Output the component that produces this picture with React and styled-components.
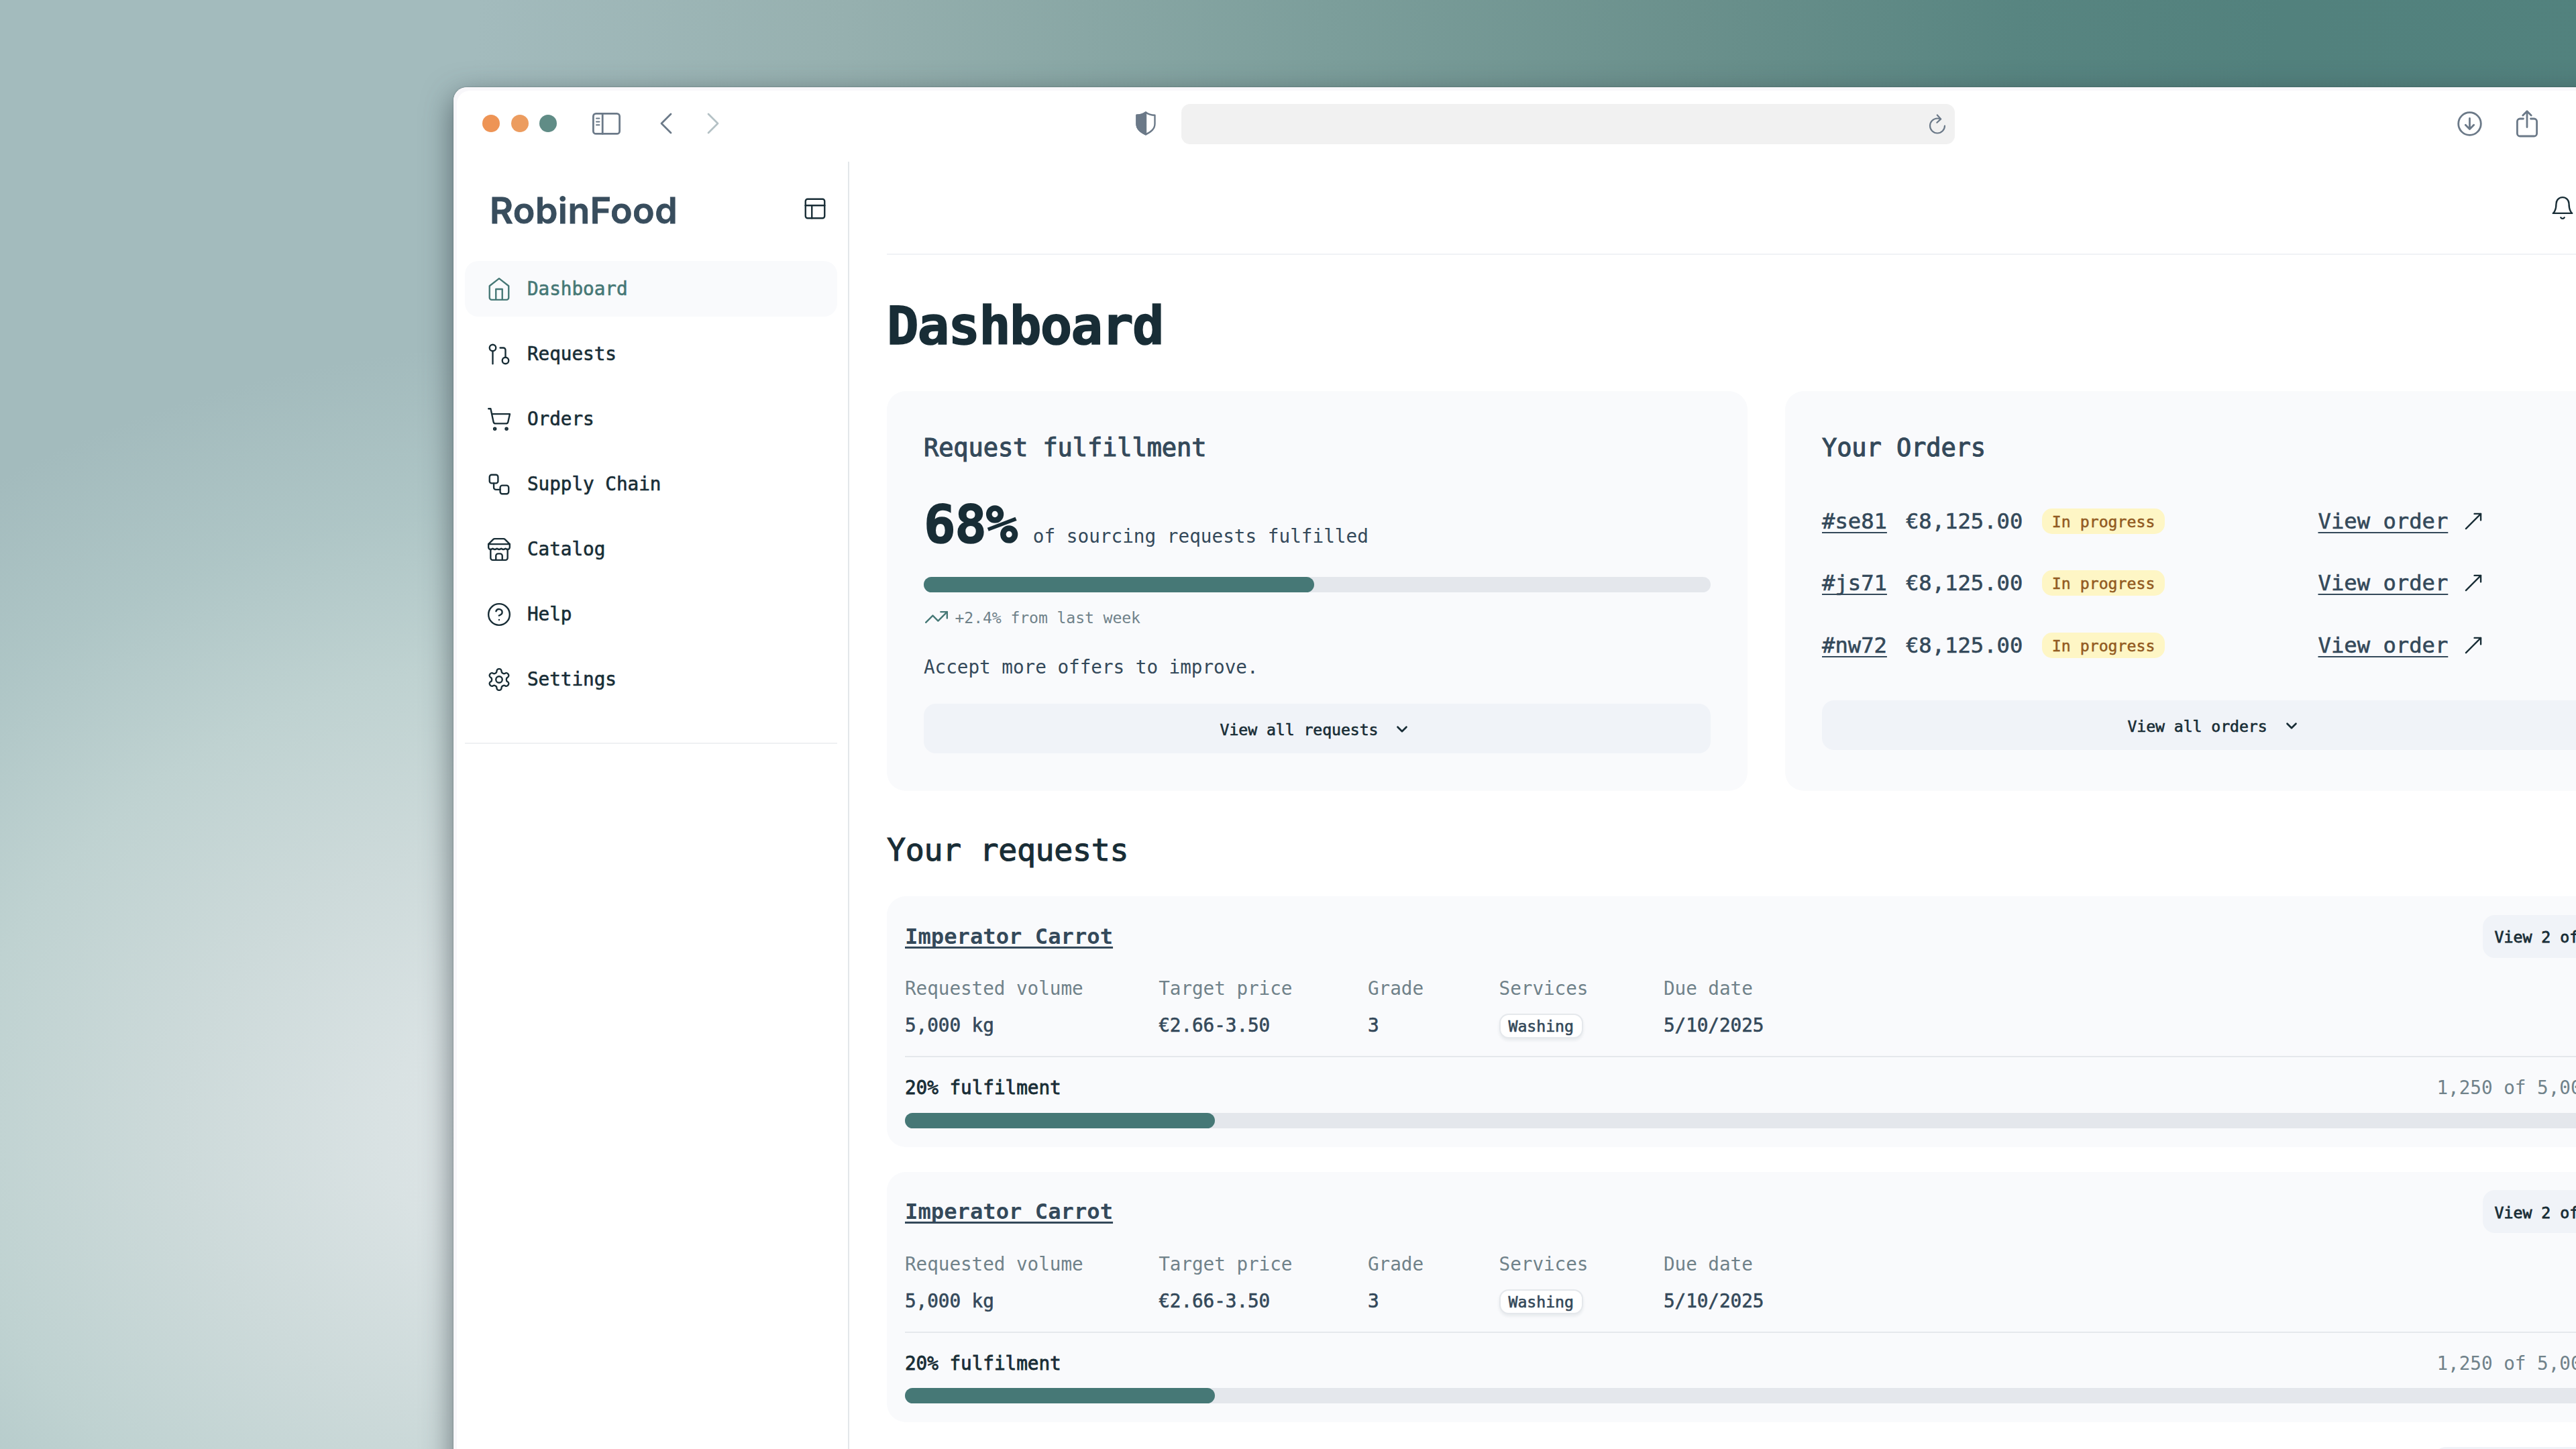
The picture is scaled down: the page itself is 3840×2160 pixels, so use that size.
import React from "react";
import styled, { createGlobalStyle } from "styled-components";
import {
  ChevronDown,
  CircleHelp,
  GitPullRequest,
  MoveUpRight,
  PanelsTopLeft,
  Plus,
  ShoppingCart,
  TrendingUp,
  Workflow,
} from "lucide-react";

const colors = {
  ink: "#182d36",
  text: "#34495a",
  muted: "#70828a",
  teal: "#467876",
  card: "#f9fafc",
  button: "#f0f3f8",
  track: "#e4e7ec",
  line: "#e5e8ec",
  chrome: "#6b7988",
};

const GlobalStyle = createGlobalStyle`
  * {
    box-sizing: border-box;
  }
  body {
    margin: 0;
    overflow: hidden;
    font-family: "DejaVu Sans Mono", monospace;
  }
  h1, h2, h3, p {
    margin: 0;
  }
`;

const Desktop = styled.div`
  width: 3840px;
  height: 2160px;
  overflow: hidden;
  padding: 130px 0 0 676px;
  background:
    radial-gradient(
      1500px 1180px at 840px 1690px,
      #dfe5e7 0%,
      #d9e2e3 18%,
      #cddada 38%,
      #bfd2d1 60%,
      rgba(177, 200, 200, 0.8) 80%,
      rgba(164, 188, 190, 0) 100%
    ),
    linear-gradient(
      93deg,
      #a3bbbd 0%,
      #a3bbbd 18%,
      #96b0af 32%,
      #7c9e9b 50%,
      #6a908c 64%,
      #588581 76%,
      #52817d 86%,
      #52827e 100%
    );
`;

const Window = styled.div`
  width: 3300px;
  height: 2200px;
  background: #fff;
  border-radius: 20px 0 0 0;
  box-shadow:
    inset 5px 5px 0 #f8f7fa,
    0 0 2px 0 rgba(60, 70, 75, 0.6),
    0 14px 44px 2px rgba(50, 62, 70, 0.62);
  overflow: hidden;
`;

const Toolbar = styled.div`
  display: flex;
  align-items: center;
  height: 111px;
  padding: 0 0 3px 43px;
  color: ${colors.chrome};
  svg {
    flex-shrink: 0;
  }
`;

const Lights = styled.div`
  display: flex;
  gap: 16.5px;
  margin-right: 53px;
`;

const Light = styled.span`
  width: 26px;
  height: 26px;
  border-radius: 50%;
  background: ${(props) => props.color};
`;

const History = styled.div`
  display: flex;
  gap: 52px;
  margin: 0 621px 0 59px;
`;

const AddressBar = styled.div`
  display: flex;
  align-items: center;
  justify-content: flex-end;
  width: 1153px;
  height: 60px;
  margin: 2px 749px 0 38px;
  padding: 0 13px 0 0;
  border-radius: 13px;
  background: #f1f1f1;
`;

const AppShell = styled.div`
  display: flex;
  height: 2088px;
`;

const Sidebar = styled.aside`
  width: 590px;
  flex-shrink: 0;
  padding: 0 16px 0 17px;
  border-right: 2px solid #e3e7ea;
`;

const Brand = styled.div`
  display: flex;
  align-items: center;
  justify-content: space-between;
  height: 148px;
  padding: 0 14px 9px 37px;
  color: ${colors.ink};
`;

const BrandName = styled.span`
  padding-top: 6px;
  font-family: Inter, "Liberation Sans", sans-serif;
  font-size: 53.6px;
  font-weight: 600;
  letter-spacing: 0.5px;
  color: #384d5d;
  -webkit-text-stroke: 0.8px currentColor;
`;

const Nav = styled.nav`
  display: flex;
  flex-direction: column;
  gap: 14px;
  padding-bottom: 53px;
  border-bottom: 2px solid #eff1f3;
`;

const NavItem = styled.a`
  display: flex;
  align-items: center;
  gap: 23px;
  height: 83px;
  padding: 0 32px;
  border-radius: 20px;
  font-size: 27.7px;
  letter-spacing: -0.05px;
  -webkit-text-stroke: 0.6px currentColor;
  color: ${(props) => (props.$active ? colors.teal : colors.ink)};
  background: ${(props) => (props.$active ? colors.card : "transparent")};
`;

const Main = styled.main`
  width: 2622px;
  flex-shrink: 0;
  margin-left: 56px;
`;

const TopBar = styled.header`
  display: flex;
  align-items: center;
  height: 139px;
  padding-left: 2479px;
  border-bottom: 2px solid #f0f2f5;
  color: ${colors.ink};
`;

const PageTitle = styled.h1`
  margin-top: 56px;
  font-size: 79px;
  line-height: 100px;
  letter-spacing: -1.8px;
  color: ${colors.ink};
  -webkit-text-stroke: 1.6px currentColor;
`;

const Cards = styled.div`
  display: grid;
  grid-template-columns: 1fr 1fr;
  gap: 56px;
  margin-top: 47px;
`;

const Card = styled.section`
  height: 596px;
  padding: 61px 55px 0;
  border-radius: 28px;
  background: ${colors.card};
`;

const CardTitle = styled.h2`
  font-size: 37px;
  font-weight: 400;
  line-height: 48px;
  letter-spacing: -0.1px;
  color: ${colors.text};
  -webkit-text-stroke: 1.1px currentColor;
`;

const Stat = styled.div`
  display: flex;
  align-items: baseline;
  gap: 24px;
  height: 90px;
  margin-top: 44.5px;
  line-height: 90px;
  font-size: 27.7px;
  color: ${colors.text};
`;

const StatValue = styled.strong`
  font-size: 79px;
  letter-spacing: -1.3px;
  color: ${colors.ink};
  -webkit-text-stroke: 1.6px currentColor;
`;

const Track = styled.div`
  height: 23px;
  margin-top: ${(props) => props.$top}px;
  border-radius: 12px;
  background: ${colors.track};
`;

const Fill = styled.div`
  width: ${(props) => props.$width}px;
  height: 100%;
  border-radius: 12px;
  background: ${colors.teal};
`;

const Trend = styled.div`
  display: flex;
  align-items: center;
  gap: 8.5px;
  height: 30px;
  margin-top: 22.5px;
  font-size: 23.2px;
  letter-spacing: -0.14px;
  color: ${colors.muted};
  svg {
    color: ${colors.teal};
  }
`;

const Hint = styled.p`
  margin-top: 41.4px;
  font-size: 27.7px;
  line-height: 36px;
  letter-spacing: -0.05px;
  color: ${colors.text};
`;

const WideButton = styled.button`
  display: flex;
  align-items: center;
  justify-content: center;
  gap: 23px;
  width: 100%;
  height: 74px;
  margin-top: ${(props) => props.$top}px;
  padding: 2px 5px 0 0;
  border: none;
  border-radius: 18px;
  background: ${colors.button};
  font-family: inherit;
  font-size: 23.2px;
  letter-spacing: -0.08px;
  color: ${colors.ink};
  -webkit-text-stroke: 0.6px currentColor;
`;

const Orders = styled.div`
  display: flex;
  flex-direction: column;
  gap: 48.3px;
  margin-top: 63px;
`;

const OrderRow = styled.div`
  display: flex;
  align-items: center;
  height: 44px;
  font-size: 32.2px;
  line-height: 44px;
  color: ${colors.text};
  svg {
    color: ${colors.ink};
  }
`;

const OrderMain = styled.div`
  display: flex;
  align-items: center;
  width: 739.5px;
`;

const Link = styled.a`
  text-decoration: underline;
  text-decoration-thickness: 2px;
  text-underline-offset: 5px;
  text-decoration-skip-ink: none;
  -webkit-text-stroke: 0.6px currentColor;
`;

const Price = styled.span`
  margin: 0 28.5px 0 28px;
  -webkit-text-stroke: 0.6px currentColor;
`;

const Badge = styled.span`
  height: 38px;
  padding: 2px 15px 0;
  border-radius: 15px;
  background: #fef6c5;
  font-size: 23.2px;
  line-height: 36px;
  color: #925b22;
  -webkit-text-stroke: 0.5px currentColor;
`;

const ViewOrder = styled.div`
  display: flex;
  align-items: center;
  gap: 18.5px;
`;

const SectionTitle = styled.h2`
  margin-top: 57.8px;
  font-size: 46.6px;
  font-weight: 400;
  line-height: 60px;
  letter-spacing: -0.35px;
  color: ${colors.ink};
  -webkit-text-stroke: 1.1px currentColor;
`;

const Requests = styled.div`
  display: flex;
  flex-direction: column;
  gap: 37px;
  margin-top: 39.2px;
`;

const RequestCard = styled.article`
  height: 373.7px;
  padding: 27.8px 27px 0;
  border-radius: 28px;
  background: ${colors.card};
`;

const RequestHead = styled.div`
  display: flex;
  align-items: center;
  justify-content: space-between;
  height: 64px;
`;

const RequestName = styled.h3`
  font-size: 32.2px;
  font-weight: 700;
  color: ${colors.text};
  text-decoration: underline;
  text-decoration-thickness: 2.5px;
  text-underline-offset: 4px;
  text-decoration-skip-ink: none;
`;

const SmallButton = styled.button`
  height: 64px;
  padding: 2px 17px 0 18px;
  border: none;
  border-radius: 18px;
  background: ${colors.button};
  font-family: inherit;
  font-size: 23.2px;
  color: ${colors.ink};
  -webkit-text-stroke: 0.8px currentColor;
`;

const Facts = styled.dl`
  display: flex;
  gap: 112.6px;
  margin: 28.4px 0 0;
  padding-bottom: 27.1px;
  border-bottom: 2px solid ${colors.line};
  font-size: 27.7px;
  line-height: 36px;
  letter-spacing: -0.07px;
`;

const Fact = styled.div`
  dt {
    color: ${colors.muted};
  }
  dd {
    display: flex;
    height: 36px;
    margin: 19px 0 0;
    white-space: nowrap;
    color: ${colors.text};
    -webkit-text-stroke: 0.6px currentColor;
  }
`;

const Tag = styled.span`
  height: 37px;
  padding: 0 12px;
  border: 2px solid ${colors.line};
  border-radius: 14px;
  background: #fff;
  box-shadow: 0 3px 4px rgba(30, 45, 60, 0.08);
  font-size: 23.2px;
  line-height: 34px;
`;

const Progress = styled.div`
  display: flex;
  justify-content: space-between;
  margin-top: 28px;
  padding-right: 2px;
  font-size: 27.7px;
  line-height: 36px;
  letter-spacing: -0.05px;
  color: ${colors.muted};
`;

const ProgressLabel = styled.span`
  color: ${colors.ink};
  -webkit-text-stroke: 0.8px currentColor;
`;

const MoreButton = styled(SmallButton)`
  align-self: flex-end;
  width: 316px;
`;

const ICON = { size: 38, strokeWidth: 1.5 };

const Icon = ({ children }) => (
  <svg
    width="38"
    height="38"
    viewBox="0 0 24 24"
    fill="none"
    stroke="currentColor"
    strokeWidth="1.5"
    strokeLinecap="round"
    strokeLinejoin="round"
  >
    {children}
  </svg>
);

const HomeIcon = () => (
  <Icon>
    <path d="m3 9 9-7 9 7v11a2 2 0 0 1-2 2H5a2 2 0 0 1-2-2z" />
    <path d="M9 22V12h6v10" />
  </Icon>
);

const StoreIcon = () => (
  <Icon>
    <path d="m2 7 4.41-4.41A2 2 0 0 1 7.83 2h8.34a2 2 0 0 1 1.42.59L22 7" />
    <path d="M4 12v8a2 2 0 0 0 2 2h12a2 2 0 0 0 2-2v-8" />
    <path d="M15 22v-4a2 2 0 0 0-2-2h-2a2 2 0 0 0-2 2v4" />
    <path d="M2 7h20" />
    <path d="M22 7v3a2 2 0 0 1-2 2a2.7 2.7 0 0 1-1.59-.63.7.7 0 0 0-.82 0A2.7 2.7 0 0 1 16 12a2.7 2.7 0 0 1-1.59-.63.7.7 0 0 0-.82 0A2.7 2.7 0 0 1 12 12a2.7 2.7 0 0 1-1.59-.63.7.7 0 0 0-.82 0A2.7 2.7 0 0 1 8 12a2.7 2.7 0 0 1-1.59-.63.7.7 0 0 0-.82 0A2.7 2.7 0 0 1 4 12a2 2 0 0 1-2-2V7" />
  </Icon>
);

const GearIcon = () => (
  <Icon>
    <path d="M12.22 2h-.44a2 2 0 0 0-2 2v.18a2 2 0 0 1-1 1.73l-.43.25a2 2 0 0 1-2 0l-.15-.08a2 2 0 0 0-2.73.73l-.22.38a2 2 0 0 0 .73 2.73l.15.1a2 2 0 0 1 1 1.72v.51a2 2 0 0 1-1 1.74l-.15.09a2 2 0 0 0-.73 2.73l.22.38a2 2 0 0 0 2.73.73l.15-.08a2 2 0 0 1 2 0l.43.25a2 2 0 0 1 1 1.73V20a2 2 0 0 0 2 2h.44a2 2 0 0 0 2-2v-.18a2 2 0 0 1 1-1.73l.43-.25a2 2 0 0 1 2 0l.15.08a2 2 0 0 0 2.73-.73l.22-.39a2 2 0 0 0-.73-2.73l-.15-.08a2 2 0 0 1-1-1.74v-.5a2 2 0 0 1 1-1.74l.15-.09a2 2 0 0 0 .73-2.73l-.22-.38a2 2 0 0 0-2.73-.73l-.15.08a2 2 0 0 1-2 0l-.43-.25a2 2 0 0 1-1-1.73V4a2 2 0 0 0-2-2z" />
    <circle cx="12" cy="12" r="3" />
  </Icon>
);

const BellIcon = () => (
  <Icon>
    <path d="M6 8a6 6 0 0 1 12 0c0 7 3 9 3 9H3s3-2 3-9" />
    <path d="M10.3 21a1.94 1.94 0 0 0 3.4 0" />
  </Icon>
);

// Browser chrome icons, drawn at their final pixel size
const chromeStroke = {
  fill: "none",
  stroke: "currentColor",
  strokeWidth: 2.8,
  strokeLinecap: "round",
  strokeLinejoin: "round",
};

const SidebarIcon = () => (
  <svg width="42" height="33" viewBox="0 0 42 33" {...chromeStroke}>
    <rect x="1.4" y="1.4" width="39.2" height="30" rx="4" />
    <path d="M15.2 1.4v30" />
    <path d="M6 8.5h4.5M6 13.5h4.5M6 18.2h4.5" strokeWidth="2" />
  </svg>
);

const BackIcon = () => (
  <svg width="18" height="32" viewBox="0 0 18 32" {...chromeStroke}>
    <path d="M16 2 2 16l14 14" />
  </svg>
);

const ForwardIcon = () => (
  <svg width="18" height="32" viewBox="0 0 18 32" {...chromeStroke} stroke="#b4c1c5">
    <path d="m2 2 14 14L2 30" />
  </svg>
);

const ShieldIcon = () => (
  <svg width="30" height="36" viewBox="0 0 30 36" {...chromeStroke} strokeWidth="2.4">
    <path d="M15 1.5c3.5 2.6 8 4.2 13.5 4.3v12.7c0 7.5-5 11.5-13.5 15.9C6.5 30 1.5 26 1.5 18.5V5.8C7 5.7 11.5 4.1 15 1.5z" />
    <path
      d="M15 1.5v32.9C6.5 30 1.5 26 1.5 18.5V5.8C7 5.7 11.5 4.1 15 1.5z"
      fill="currentColor"
    />
  </svg>
);

const ReloadIcon = () => (
  <svg width="26" height="30" viewBox="0 0 26 30" {...chromeStroke} strokeWidth="2.2">
    <path d="M24 17.5a11 11 0 1 1-11-11c1.9 0 3.3.3 4.8.9" />
    <path d="m12.8 1.5 5.4 5.9-5.8 5.4" />
  </svg>
);

const DownloadIcon = () => (
  <svg width="37" height="37" viewBox="0 0 37 37" {...chromeStroke}>
    <circle cx="18.5" cy="18.5" r="16.8" />
    <path d="M18.5 10.5V26M12.3 20.3l6.2 6.2 6.2-6.2" />
  </svg>
);

const ShareIcon = () => (
  <svg width="32" height="41" viewBox="0 0 32 41" {...chromeStroke}>
    <path d="M10.5 13H5.4a4 4 0 0 0-4 4v18a4 4 0 0 0 4 4h21.2a4 4 0 0 0 4-4V17a4 4 0 0 0-4-4h-5.1" />
    <path d="M16 25.5V2M9.8 8 16 1.8 22.2 8" />
  </svg>
);

const ToolbarActions = styled.div`
  display: flex;
  align-items: center;
  gap: 51px;
`;

const navItems = [
  { label: "Dashboard", icon: <HomeIcon />, active: true },
  { label: "Requests", icon: <GitPullRequest {...ICON} /> },
  { label: "Orders", icon: <ShoppingCart {...ICON} /> },
  { label: "Supply Chain", icon: <Workflow {...ICON} /> },
  { label: "Catalog", icon: <StoreIcon /> },
  { label: "Help", icon: <CircleHelp {...ICON} /> },
  { label: "Settings", icon: <GearIcon /> },
];

const orders = ["#se81", "#js71", "#nw72"];

const requests = [
  { id: 1, name: "Imperator Carrot" },
  { id: 2, name: "Imperator Carrot" },
];

const Request = ({ name }) => (
  <RequestCard>
    <RequestHead>
      <RequestName>{name}</RequestName>
      <SmallButton>View 2 offers</SmallButton>
    </RequestHead>
    <Facts>
      <Fact>
        <dt>Requested volume</dt>
        <dd>5,000 kg</dd>
      </Fact>
      <Fact>
        <dt>Target price</dt>
        <dd>€2.66-3.50</dd>
      </Fact>
      <Fact>
        <dt>Grade</dt>
        <dd>3</dd>
      </Fact>
      <Fact>
        <dt>Services</dt>
        <dd>
          <Tag>Washing</Tag>
        </dd>
      </Fact>
      <Fact>
        <dt>Due date</dt>
        <dd>5/10/2025</dd>
      </Fact>
    </Facts>
    <Progress>
      <ProgressLabel>20% fulfilment</ProgressLabel>
      <span>1,250 of 5,000 kg</span>
    </Progress>
    <Track $top={18.5}>
      <Fill $width={462} />
    </Track>
  </RequestCard>
);

const App = () => (
  <Desktop>
    <GlobalStyle />
    <Window>
      <Toolbar>
        <Lights>
          <Light color="#ee9455" />
          <Light color="#ec9c5f" />
          <Light color="#608c86" />
        </Lights>
        <SidebarIcon />
        <History>
          <BackIcon />
          <ForwardIcon />
        </History>
        <ShieldIcon />
        <AddressBar>
          <ReloadIcon />
        </AddressBar>
        <ToolbarActions>
          <DownloadIcon />
          <ShareIcon />
          <Plus size={44} strokeWidth={1.5} />
        </ToolbarActions>
      </Toolbar>
      <AppShell>
        <Sidebar>
          <Brand>
            <BrandName>RobinFood</BrandName>
            <PanelsTopLeft {...ICON} />
          </Brand>
          <Nav>
            {navItems.map((item) => (
              <NavItem key={item.label} $active={item.active}>
                {item.icon}
                {item.label}
              </NavItem>
            ))}
          </Nav>
        </Sidebar>
        <Main>
          <TopBar>
            <BellIcon />
          </TopBar>
          <PageTitle>Dashboard</PageTitle>
          <Cards>
            <Card>
              <CardTitle>Request fulfillment</CardTitle>
              <Stat>
                <StatValue>68%</StatValue>
                <span>of sourcing requests fulfilled</span>
              </Stat>
              <Track $top={33.3}>
                <Fill $width={582} />
              </Track>
              <Trend>
                <TrendingUp {...ICON} />
                +2.4% from last week
              </Trend>
              <Hint>Accept more offers to improve.</Hint>
              <WideButton $top={36.6}>
                View all requests
                <ChevronDown size={26} strokeWidth={2.5} />
              </WideButton>
            </Card>
            <Card>
              <CardTitle>Your Orders</CardTitle>
              <Orders>
                {orders.map((id) => (
                  <OrderRow key={id}>
                    <OrderMain>
                      <Link>{id}</Link>
                      <Price>€8,125.00</Price>
                      <Badge>In progress</Badge>
                    </OrderMain>
                    <ViewOrder>
                      <Link>View order</Link>
                      <MoveUpRight {...ICON} />
                    </ViewOrder>
                  </OrderRow>
                ))}
              </Orders>
              <WideButton $top={60.5}>
                View all orders
                <ChevronDown size={26} strokeWidth={2.5} />
              </WideButton>
            </Card>
          </Cards>
          <SectionTitle>Your requests</SectionTitle>
          <Requests>
            {requests.map((request) => (
              <Request key={request.id} name={request.name} />
            ))}
            <MoreButton>View all requests</MoreButton>
          </Requests>
        </Main>
      </AppShell>
    </Window>
  </Desktop>
);

export default App;
